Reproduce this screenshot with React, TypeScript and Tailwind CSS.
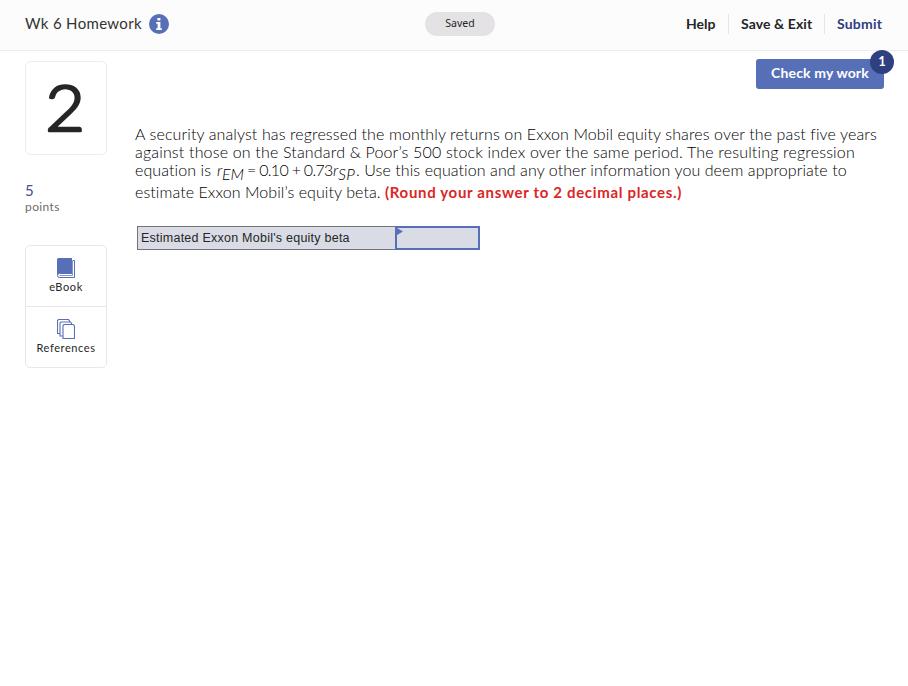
import React from "react";

function InfoIcon() {
  return (
    <svg className="ml-[7px] size-5" viewBox="0 0 20 20" aria-label="Info">
      <circle cx="10" cy="10" r="10" fill="#566fb7" />
      <path d="M8.4 4h3v2.6h-3zM7.2 8h4.2v6.3h1.4V16H7.2v-1.7h1.4V9.7H7.2z" fill="#fff" />
    </svg>
  );
}

function BookIcon() {
  return (
    <svg className="h-5 w-[18px]" viewBox="0 0 18 20">
      <path d="M1.5 0H15v15H2.5L0 17V1.5Q0 0 1.5 0z" fill="#566fb7" />
      <path d="M15.5 2.5h2V19.5H2.2Q.5 19.5.5 17.5T2.5 15.5H15.5" fill="none" stroke="#566fb7" />
      <path d="M2.5 17.5H15.5V3" fill="none" stroke="#8295cb" />
    </svg>
  );
}

function PagesIcon() {
  return (
    <svg className="h-5 w-[18px]" viewBox="0 0 18 20" fill="#fff" stroke="#566fb7" strokeWidth="1.1">
      <path d="M1.5.5h10l1 1.5v12.5H.5V1.5z" />
      <path d="M4 3h9.5l1 1.5V17H3V4z" />
      <path d="M7 5.5h9.2L17.5 7v12.5H6V6.5z" />
    </svg>
  );
}

export default function App() {
  return (
    <div className="h-[686px] w-[908px] overflow-hidden bg-white font-['Lato',sans-serif] text-[#262626] [font-variant-ligatures:none]">
      <header className="flex h-[51px] border-b border-[#ececec] bg-[#fcfcfc] pl-[25px] pr-[25px]">
        <div className="flex h-12 w-[400px] items-center">
          <span className="w-[117px] whitespace-nowrap pb-px text-[15px] tracking-[0.33px] text-[#333]">Wk 6 Homework</span>
          <InfoIcon />
        </div>
        <div className="mt-3 flex h-6 w-[70px] items-center justify-center rounded-full bg-[#e4e2e5] pb-px font-['Noto_Sans',sans-serif] text-[10.5px]">
          Saved
        </div>
        <nav className="ml-auto flex h-12 items-center whitespace-nowrap text-[14px] font-bold">
          <a className="w-[30px] pb-0.5">Help</a>
          <span className="mx-3 h-5 w-px bg-[#e6e6e6]" />
          <a className="w-[71px] pb-0.5 tracking-[0.1px]">Save &amp; Exit</a>
          <span className="mx-3 h-5 w-px bg-[#e6e6e6]" />
          <a className="w-[46px] pb-0.5 tracking-[0.2px] text-[#2e4080]">Submit</a>
        </nav>
      </header>

      <div className="flex">
        <aside className="ml-[25px] w-[82px] shrink-0 pt-[10px]">
          <div className="h-[94px] rounded-[6px] border border-[#ececec]">
            <svg className="size-full" viewBox="0 0 80 92">
              <text x="36.5" y="69" transform="scale(1.07 1)" textAnchor="middle" fontFamily="Lato, sans-serif" fontWeight="300" fontSize="64" fill="#262626" stroke="#262626" strokeWidth="2.6" strokeLinejoin="round">2</text>
            </svg>
          </div>
          <div className="mt-[26px] text-[15px] leading-[18px] text-[#3f5093]">5</div>
          <div className="text-[12px] leading-4 tracking-[0.4px] text-[#6c6c6c]">points</div>
          <div className="mt-[30px] h-[123px] rounded-[5px] border border-[#e8e8e8] text-[11px] tracking-[0.6px]">
            <div className="flex h-[61px] flex-col items-center border-b border-[#e8e8e8] pt-3">
              <BookIcon />
              <span className="mt-[1px] leading-4">eBook</span>
            </div>
            <div className="flex flex-col items-center pt-3">
              <PagesIcon />
              <span className="mt-[1px] leading-4">References</span>
            </div>
          </div>
        </aside>

        <main className="ml-7 w-[773px] shrink-0 pt-2">
          <div className="relative ml-[621px] flex h-[30px] w-32 items-center justify-center rounded-[3px] bg-[#566fb7] pb-[3px] text-[14px] font-bold tracking-[0.15px] text-white">
            Check my work
            <span className="absolute -right-[10px] -top-[9px] flex size-6 items-center justify-center rounded-full bg-[#2e4080] text-[13px]">1</span>
          </div>
          <div className="mt-[36px] whitespace-nowrap text-[16px] font-light leading-[18px] text-black">
            <p className="tracking-[0.11px]">A security analyst has regressed the monthly returns on Exxon Mobil equity shares over the past five years</p>
            <p className="tracking-[0.17px]">against those on the Standard &amp; Poor’s 500 stock index over the same period. The resulting regression</p>
            <p className="flex h-[22px]">
              <span className="w-[82px] tracking-[0.1px]">equation is</span>
              <i className="w-[5px]">r</i>
              <i className="mt-1 w-[25px]">EM</i>
              <span className="w-[86px] tracking-[-0.7px]">= 0.10 + 0.73</span>
              <i className="w-[5px]">r</i>
              <i className="mt-1 w-[18px] tracking-[0.4px]">SP</i>
              <span className="tracking-[0.08px]">. Use this equation and any other information you deem appropriate to</span>
            </p>
            <p className="flex">
              <span className="w-[250px] tracking-[0.07px]">estimate Exxon Mobil’s equity beta.</span>
              <b className="text-[15px] font-bold tracking-[0.67px] text-[#dc2525]">(Round your answer to 2 decimal places.)</b>
            </p>
          </div>
          <div className="ml-[2px] mt-[25px] flex h-6 w-[343px] border border-[#73737b] bg-[#d9dbe5] font-['Liberation_Sans',Arial,sans-serif] text-[12.5px] leading-[22px]">
            <span className="w-[257px] whitespace-nowrap pl-[3px] tracking-[0.24px]">Estimated Exxon Mobil's equity beta</span>
            <div className="-my-px -mr-px flex-1 border-2 border-[#566fb7]">
              <svg className="h-2 w-[6px]" viewBox="0 0 6 8"><path d="M0 0L6 3.5L0 7z" fill="#566fb7" /></svg>
            </div>
          </div>
        </main>
      </div>
    </div>
  );
}
